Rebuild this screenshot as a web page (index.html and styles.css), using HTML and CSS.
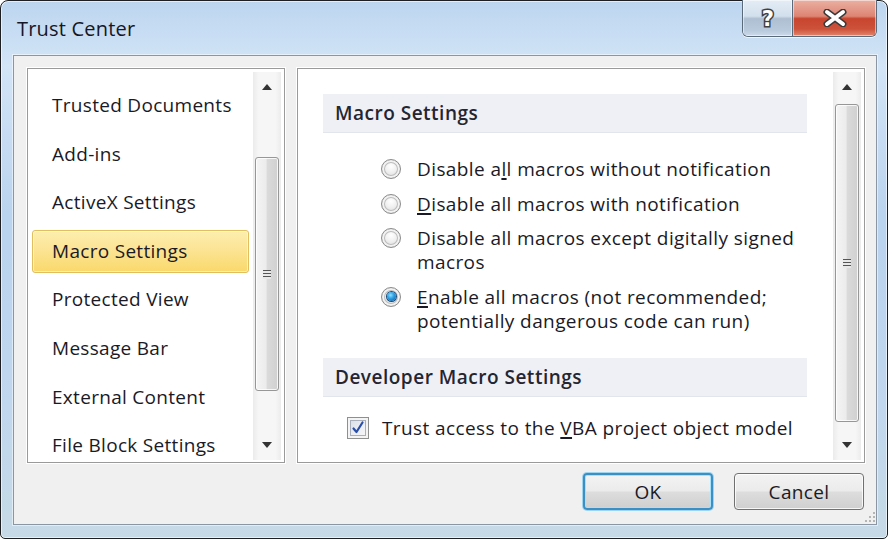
FILE: index.html
```html
<!DOCTYPE html>
<html>
  <head>
    <meta charset="utf-8">
    <title>Trust Center</title>
    <link rel="stylesheet" href="styles.css">
  </head>
  <body>
    <div class="window">
      <div class="titlebar">
        <span class="title">Trust Center</span>
        <div class="caption-buttons">
          <div class="cap-btn cap-help">
            <svg width="20" height="24" viewBox="0 0 20 24">
              <text x="10" y="20" text-anchor="middle" class="help-glyph">?</text>
            </svg>
          </div>
          <div class="cap-btn cap-close">
            <svg width="24" height="18" viewBox="0 0 24 18">
              <path d="M4 3 L20 15 M20 3 L4 15" stroke="#3a3a3a" stroke-width="7" stroke-linecap="round"/>
              <path d="M4 3 L20 15 M20 3 L4 15" stroke="#ffffff" stroke-width="4" stroke-linecap="round"/>
            </svg>
          </div>
        </div>
      </div>

      <div class="client">
        <div class="panels">
          <div class="panel nav-panel">
            <ul class="nav-list">
              <li class="nav-item">Trusted Documents</li>
              <li class="nav-item">Add-ins</li>
              <li class="nav-item">ActiveX Settings</li>
              <li class="nav-item selected">Macro Settings</li>
              <li class="nav-item">Protected View</li>
              <li class="nav-item">Message Bar</li>
              <li class="nav-item">External Content</li>
              <li class="nav-item">File Block Settings</li>
            </ul>
            <div class="scrollbar">
              <div class="sb-btn">
                <svg width="10" height="6" viewBox="0 0 10 6"><polygon points="0,6 5,0 10,6" fill="#333"/></svg>
              </div>
              <div class="sb-track">
                <div class="thumb thumb-nav">
                  <span class="grip"></span>
                </div>
              </div>
              <div class="sb-btn">
                <svg width="10" height="6" viewBox="0 0 10 6"><polygon points="0,0 10,0 5,6" fill="#333"/></svg>
              </div>
            </div>
          </div>

          <div class="panel main-panel">
            <div class="content">
              <div class="band">Macro Settings</div>
              <div class="options">
                <label class="option">
                  <span class="radio"></span>
                  <span class="option-text">Disable a<u>l</u>l macros without notification</span>
                </label>
                <label class="option">
                  <span class="radio"></span>
                  <span class="option-text"><u>D</u>isable all macros with notification</span>
                </label>
                <label class="option">
                  <span class="radio"></span>
                  <span class="option-text">Disable all macros except di<u>g</u>itally signed<br>macros</span>
                </label>
                <label class="option">
                  <span class="radio checked"></span>
                  <span class="option-text"><u>E</u>nable all macros (not recommended;<br>potentially dangerous code can run)</span>
                </label>
              </div>
              <div class="band band-dev">Developer Macro Settings</div>
              <label class="check-row">
                <span class="checkbox">
                  <svg width="16" height="16" viewBox="0 0 16 16">
                    <path d="M3.5 8.5 L6.5 12 L12.5 2.5" fill="none" stroke="#2a4fa8" stroke-width="2.2" stroke-linecap="round" stroke-linejoin="round"/>
                  </svg>
                </span>
                <span class="option-text">Trust access to the <u>V</u>BA project object model</span>
              </label>
            </div>
            <div class="scrollbar">
              <div class="sb-btn">
                <svg width="10" height="6" viewBox="0 0 10 6"><polygon points="0,6 5,0 10,6" fill="#333"/></svg>
              </div>
              <div class="sb-track">
                <div class="thumb thumb-main">
                  <span class="grip"></span>
                </div>
              </div>
              <div class="sb-btn">
                <svg width="10" height="6" viewBox="0 0 10 6"><polygon points="0,0 10,0 5,6" fill="#333"/></svg>
              </div>
            </div>
          </div>
        </div>

        <div class="button-row">
          <button class="btn btn-default">OK</button>
          <button class="btn">Cancel</button>
        </div>

        <svg class="size-grip" width="14" height="14" viewBox="0 0 14 14">
          <g fill="#b5b5b5">
            <rect x="11" y="2" width="2" height="2"/>
            <rect x="7" y="6" width="2" height="2"/>
            <rect x="11" y="6" width="2" height="2"/>
            <rect x="3" y="10" width="2" height="2"/>
            <rect x="7" y="10" width="2" height="2"/>
            <rect x="11" y="10" width="2" height="2"/>
          </g>
        </svg>
      </div>
    </div>
  </body>
</html>
```

FILE: styles.css
```css
body {
  margin: 0;
  padding: 0;
  background-color: #ffffff;
  font-family: "Open Sans", "Noto Sans", sans-serif;
  font-size: 19px;
  letter-spacing: 0.4px;
  color: #1a1a26;
}

.window {
  width: 888px;
  height: 539px;
  box-sizing: border-box;
  border: 1px solid #1d1f22;
  border-radius: 8px 8px 5px 5px;
  padding: 0 10px 13px 12px;
  display: flex;
  flex-direction: column;
  background: linear-gradient(to bottom, #bcd5ef 0%, #d3e5f7 12%, #bad3ee 40%, #c0d7ee 75%, #c6dae6 100%);
  box-shadow: inset 0 0 0 1px rgba(255, 255, 255, 0.6);
}

.titlebar {
  height: 54px;
  display: flex;
  align-items: flex-start;
}

.title {
  font-size: 20px;
  letter-spacing: 0.2px;
  color: #161626;
  padding: 15px 0 0 4px;
  line-height: 26px;
}

.caption-buttons {
  margin-left: auto;
  margin-top: -1px;
  display: flex;
  border: 1px solid #5a6a7a;
  border-top: none;
  border-radius: 0 0 6px 6px;
  overflow: hidden;
  box-shadow: 0 1px 0 rgba(255, 255, 255, 0.7);
}

.cap-btn {
  height: 36px;
  display: flex;
  align-items: center;
  justify-content: center;
  box-shadow: inset 0 0 0 1px rgba(255, 255, 255, 0.5);
}

.cap-help {
  width: 49px;
  background: linear-gradient(to bottom, #e4edf6 0%, #d2dfec 45%, #aebfd1 52%, #b9cadc 85%, #cddaea 100%);
  border-right: 1px solid #5a6a7a;
}

.cap-close {
  width: 83px;
  background: linear-gradient(to bottom, #eab0a3 0%, #dd8573 45%, #c8452e 52%, #cd5139 80%, #e2866d 100%);
}

.help-glyph {
  font-family: "DejaVu Sans", sans-serif;
  font-weight: bold;
  font-size: 21px;
  fill: #ffffff;
  stroke: #404040;
  stroke-width: 3px;
  paint-order: stroke;
}

.client {
  flex: 1;
  position: relative;
  background-color: #f0f0f0;
  border: 1px solid #8a96a3;
  box-shadow: 0 0 0 1px rgba(255, 255, 255, 0.5);
  display: flex;
  flex-direction: column;
  padding: 12px 10px 0 13px;
}

.panels {
  display: flex;
  gap: 12px;
  height: 395px;
}

.panel {
  box-sizing: border-box;
  height: 395px;
  background-color: #ffffff;
  border: 1px solid #9a9a9a;
  box-shadow: inset 0 0 0 1px #ffffff, 0 0 0 1px #ffffff;
  display: flex;
  padding: 3px 3px 2px 0;
}

.nav-panel {
  width: 258px;
}

.main-panel {
  width: 568px;
}

.nav-list {
  list-style: none;
  margin: 0;
  padding: 12px 4px 0 4px;
  flex: 1;
  display: flex;
  flex-direction: column;
  gap: 5.6px;
}

.nav-item {
  height: 43px;
  box-sizing: border-box;
  line-height: 41px;
  padding-left: 19px;
  letter-spacing: 0.3px;
  border: 1px solid transparent;
  border-radius: 3px;
}

.nav-item.selected {
  border-color: #e2bf5c;
  background: linear-gradient(to bottom, #fdeeae 0%, #fce598 40%, #fad86a 100%);
  box-shadow: inset 0 0 0 1px rgba(255, 250, 225, 0.7);
}

.scrollbar {
  width: 28px;
  display: flex;
  flex-direction: column;
  background: linear-gradient(to right, #ebebeb 0%, #f6f6f6 20%, #f6f6f6 80%, #ececec 100%);
}

.sb-btn {
  height: 30px;
  display: flex;
  align-items: center;
  justify-content: center;
}

.sb-track {
  flex: 1;
  padding: 0 2px;
}

.thumb {
  box-sizing: border-box;
  border: 1px solid #979797;
  border-radius: 3px;
  background: linear-gradient(to right, #f4f4f4 0%, #ececec 45%, #dadada 52%, #d0d0d0 100%);
  box-shadow: inset 0 0 0 1px rgba(255, 255, 255, 0.8);
  display: flex;
  align-items: center;
  justify-content: center;
}

.thumb-nav {
  margin-top: 55px;
  height: 234px;
}

.thumb-main {
  margin-top: 2px;
  height: 318px;
}

.grip {
  width: 8px;
  height: 9px;
  background: repeating-linear-gradient(to bottom, #555555 0, #555555 1px, #e8e8e8 1px, #e8e8e8 3px);
}

.content {
  flex: 1;
  padding: 22px 26px 0 25px;
}

.band {
  height: 39px;
  box-sizing: border-box;
  line-height: 38px;
  padding-left: 12px;
  background-color: #eff0f5;
  border-bottom: 1px solid #e2e5ec;
  font-weight: 600;
  letter-spacing: 0.5px;
  color: #252530;
}

.options {
  margin: 24px 0 0 58px;
  display: flex;
  flex-direction: column;
  gap: 10.5px;
}

.option,
.check-row {
  display: flex;
  align-items: flex-start;
  line-height: 24px;
}

.option-text u {
  text-decoration-thickness: 1.5px;
  text-underline-offset: 2px;
}

.radio {
  width: 20px;
  height: 20px;
  margin: 2px 16px 0 0;
  box-sizing: border-box;
  border-radius: 50%;
  border: 1px solid #8c8c8c;
  background: radial-gradient(circle at 50% 35%, #ffffff 0%, #f0f0f0 40%, #cfcfcf 100%);
  box-shadow: inset 0 0 0 2px #f2f2f2, inset 0 0 0 3px #bdbdbd;
  position: relative;
  flex: none;
}

.radio.checked::after {
  content: "";
  position: absolute;
  left: 4.5px;
  top: 4.5px;
  width: 9px;
  height: 9px;
  border-radius: 50%;
  background: radial-gradient(circle at 40% 35%, #8fe0ff 0%, #2fa2e6 40%, #0b4f93 100%);
  box-shadow: 0 0 0 1px #1b4d7a;
}

.band-dev {
  margin-top: 25px;
}

.check-row {
  margin: 19px 0 0 24px;
}

.checkbox {
  width: 22px;
  height: 22px;
  margin: 1px 13px 0 0;
  box-sizing: border-box;
  border: 1px solid #8e8f8f;
  background: linear-gradient(135deg, #d5dbe5 0%, #eef0f4 60%, #f8f8f8 100%);
  box-shadow: inset 0 0 0 2px #f4f4f4, inset 0 0 0 3px #aab0bb;
  display: flex;
  align-items: center;
  justify-content: center;
  flex: none;
}

.button-row {
  display: flex;
  justify-content: flex-end;
  gap: 21px;
  margin: 10px 2px 0 0;
}

.btn {
  width: 130px;
  height: 37px;
  font-family: "Open Sans", "Noto Sans", sans-serif;
  font-size: 19px;
  letter-spacing: 0.35px;
  color: #1a1a26;
  border: 1px solid #707070;
  border-radius: 4px;
  background: linear-gradient(to bottom, #f3f3f3 0%, #ebebeb 48%, #dddddd 52%, #cfcfcf 100%);
  box-shadow: inset 0 0 0 1px rgba(255, 255, 255, 0.8);
  padding: 0;
}

.btn-default {
  border: 2px solid #3c8fc4;
  box-shadow: inset 0 0 0 1px #a8e2fa, 0 0 0 1px #9fd4ee;
}

.size-grip {
  position: absolute;
  right: 0;
  bottom: 0;
}
```
